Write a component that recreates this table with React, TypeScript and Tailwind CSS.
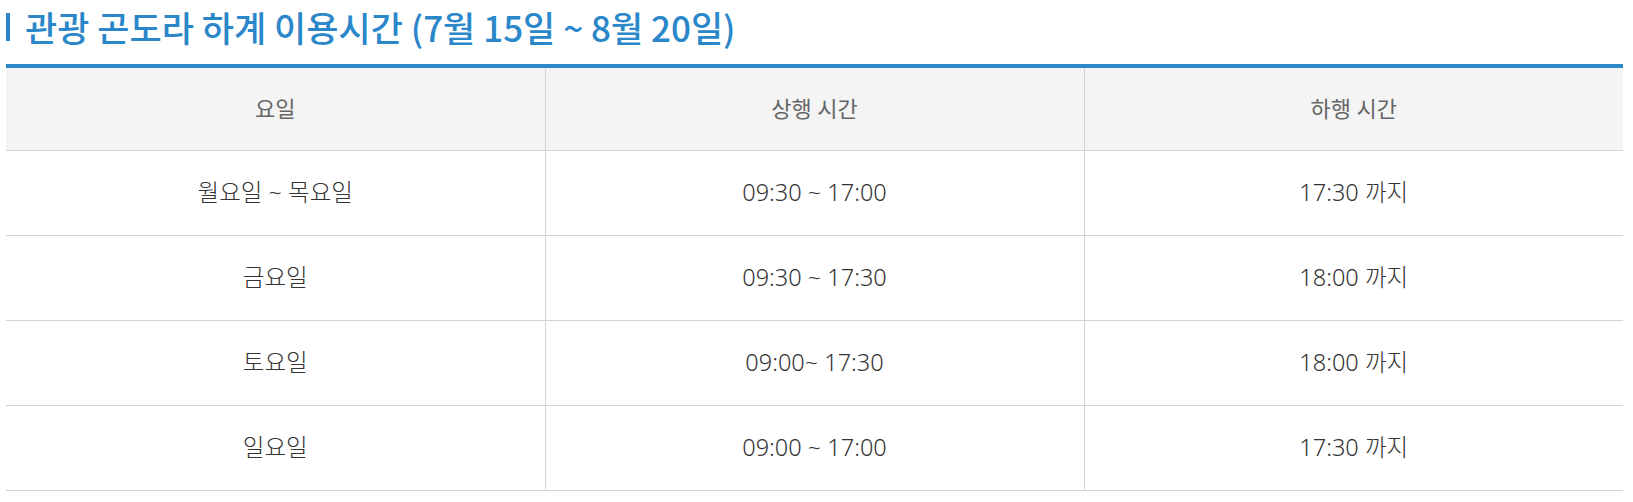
const ROWS: { day: string; up: string; down: string }[] = [
  { day: '월요일 ~ 목요일', up: '09:30 ~ 17:00', down: '17:30 까지' },
  { day: '금요일', up: '09:30 ~ 17:30', down: '18:00 까지' },
  { day: '토요일', up: '09:00~ 17:30', down: '18:00 까지' },
  { day: '일요일', up: '09:00 ~ 17:00', down: '17:30 까지' },
];

export default function App() {
  return (
    <div className="w-[1633px] bg-white px-[6px] pt-[4px] pb-[9px] font-['Noto_Sans','Noto_Sans_CJK_KR',sans-serif]">
      <h2 className="flex items-center gap-[15px] font-['Noto_Sans_CJK_KR',sans-serif] text-[35px] font-medium leading-[46px] text-[#2a87c9]">
        <span className="block h-[28px] w-[4px] bg-[#2a87c9]" />
        관광 곤도라 하계 이용시간 (7월 15일 ~ 8월 20일)
      </h2>

      <table className="mt-[14px] w-[1617px] table-fixed border-collapse border-t-4 border-[#2a88c8]">
        <thead>
          <tr className="h-[84px] border-b border-[#d3d3d3] bg-[#f4f4f4] text-[22px] text-[#666]">
            <th className="border-r border-[#d3d3d3] font-normal">요일</th>
            <th className="border-r border-[#d3d3d3] font-normal">상행 시간</th>
            <th className="font-normal">하행 시간</th>
          </tr>
        </thead>
        <tbody>
          {ROWS.map((r) => (
            <tr
              key={r.day}
              className="h-[85px] border-b border-[#d3d3d3] text-center text-[23.5px] font-light text-[#333]"
            >
              <td className="border-r border-[#d3d3d3]">{r.day}</td>
              <td className="border-r border-[#d3d3d3]">{r.up}</td>
              <td>{r.down}</td>
            </tr>
          ))}
        </tbody>
      </table>
    </div>
  );
}
